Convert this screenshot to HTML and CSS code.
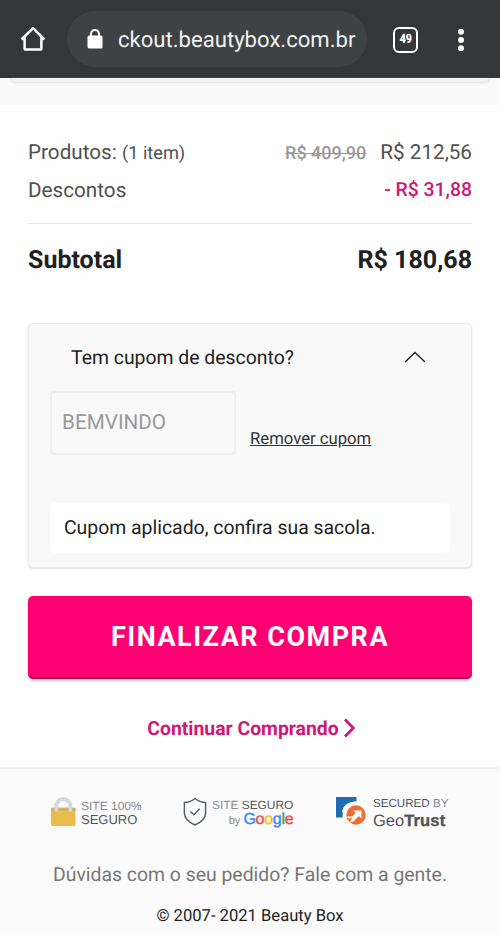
FILE: index.html
```html
<!DOCTYPE html>
<html lang="pt-BR">
<head>
<meta charset="utf-8">
<title>Beauty Box - Sacola</title>
<link rel="stylesheet" href="styles.css">
</head>
<body>
<header class="browser">
  <svg class="home" width="28" height="28" viewBox="0 0 28 28"><path d="M2.500 14.500 14 3.200 25.500 14.500M5.600 12v11.200q0 1.400 1.400 1.400h14q1.400 0 1.400-1.400V12" fill="none" stroke="#fff" stroke-width="2.500" stroke-linejoin="round"/></svg>
  <div class="address">
    <svg width="16" height="20" viewBox="0 0 16 20"><path d="M4 7V5a4 4 0 0 1 8 0v2" fill="none" stroke="#fff" stroke-width="2"/><rect x=".5" y="6.600" width="15" height="13" rx="1.500" fill="#fff"/></svg>
    <span class="url">ckout.beautybox.com.br</span>
  </div>
  <span class="tabs">49</span>
  <svg class="dots" width="8" height="24" viewBox="0 0 8 24" fill="#fff"><circle cx="4" cy="3.700" r="3"/><circle cx="4" cy="12" r="3"/><circle cx="4" cy="20.300" r="3"/></svg>
</header>
<div class="previous"><div class="previous-card"></div></div>
<main>
  <section class="summary">
    <div class="row products"><span>Produtos: <small>(1 item)</small></span><span><s>R$ 409,90</s><span class="price">R$ 212,56</span></span></div>
    <div class="row discounts"><span class="label">Descontos</span><span class="discount">- R$ 31,88</span></div>
    <div class="row subtotal"><span class="label">Subtotal</span><span>R$ 180,68</span></div>
  </section>
  <section class="coupon">
    <div class="coupon-title"><span>Tem cupom de desconto?</span><svg width="22" height="12" viewBox="0 0 22 12"><path d="m1 11 10-9.500L21 11" fill="none" stroke="#222" stroke-width="1.400"/></svg></div>
    <div class="coupon-form"><div class="field">BEMVINDO</div><a class="remove">Remover cupom</a></div>
    <div class="message">Cupom aplicado, confira sua sacola.</div>
  </section>
  <button class="checkout">FINALIZAR COMPRA</button>
  <a class="continue"><span>Continuar Comprando</span><svg width="13" height="20" viewBox="0 0 13 20"><path d="m2 1.500 8.300 8.500L2 18.500" fill="none" stroke="#cf1775" stroke-width="2.800"/></svg></a>
</main>
<footer>
  <div class="seals">
    <div class="seal safe">
      <svg width="26" height="30" viewBox="0 0 26 30"><rect x="1" y="10.500" width="24.500" height="18.500" rx="1.500" fill="#e8bd4d"/><path d="M1 11h24.500v3H1z" fill="#d9b052"/><path d="M6.300 13V9a7 7 0 0 1 14 0v4" fill="none" stroke="#d3d7df" stroke-width="4" stroke-linecap="round"/></svg>
      <div class="seal-text"><span class="light">SITE 100%</span><span class="secure">SEGURO</span></div>
    </div>
    <div class="seal google">
      <svg width="24" height="30" viewBox="0 0 24 30"><path d="M12 1.500Q16.500 5.400 22.600 5.500V16c0 6-5 9.500-10.600 12C6.400 25.500 1.400 22 1.400 16V5.500Q7.500 5.400 12 1.500Z" fill="none" stroke="#596066" stroke-width="1.500"/><path d="m7.500 14.500 3.500 3.200 5.700-6" fill="none" stroke="#596066" stroke-width="1.500"/></svg>
      <div class="seal-text"><span><span class="light">SITE</span> SEGURO</span><span class="by">by <b><i class="blue">G</i><i class="red">o</i><i class="yellow">o</i><i class="blue">g</i><i class="green">l</i><i class="red">e</i></b></span></div>
    </div>
    <div class="seal geo">
      <svg width="31" height="30" viewBox="0 0 31 30"><path d="M0 0h20.500v4.500C12 4.500 6.500 10 6.500 20.500H0Z" fill="#1e6cb3"/><circle cx="20" cy="18" r="11" fill="#fbfbfb"/><path d="M7 15.500C8 8.500 13 5.500 20.500 5.500" fill="none" stroke="#fbfbfb" stroke-width="2"/><circle cx="20" cy="18" r="9.700" fill="#eb6f36"/><path d="M11 19.500h5l3.800-3.600-2.500-2.400h8.200v8l-2.600-2.500-5.900 5.800h-3.500l3-3.500h-4.500Z" fill="#fff"/></svg>
      <div class="seal-text"><span>SECURED <span class="light">BY</span></span><span class="trust">Geo<b>Trust</b></span></div>
    </div>
  </div>
  <p class="help">Dúvidas com o seu pedido? Fale com a gente.</p>
  <p class="copyright">© 2007- 2021 Beauty Box</p>
</footer>
</body>
</html>
```
FILE: styles.css
```css
* { box-sizing: border-box; }
body { margin: 0; width: 500px; height: 934px; overflow: hidden; background: #fff; font-family: Roboto, sans-serif; color: #222; white-space: nowrap; text-rendering: geometricPrecision; }
.browser { height: 78px; background: #35363a; display: flex; align-items: center; padding-left: 19px; }
.home { margin-right: 20px; }
.address { width: 300px; height: 56px; border-radius: 28px; background: #3e4245; display: flex; align-items: center; padding-left: 20px; color: #f1f1f1; }
.url { margin: 2px 0 0 15px; font-size: 22.1px; line-height: 28px; }
.tabs { width: 25px; height: 26px; margin: 1px 0 0 26px; border: 2.5px solid #fff; border-radius: 6px; color: #fff; font: 700 13px/22px "Roboto Condensed", Roboto, sans-serif; text-align: center; letter-spacing: -.6px; }
.dots { margin: 1px 0 0 39px; }
.previous { height: 27px; background: #fafafa; padding: 0 10px; }
.previous-card { height: 5px; background: #f1f2f2; border: 1px solid #e5e6e6; border-top: 0; border-radius: 0 0 5px 5px; box-shadow: 0 1px 2px #eee; }
main { height: 664px; padding: 36px 28px 0; border-bottom: 2px solid #f1f1f1; }
.row { display: flex; justify-content: space-between; align-items: baseline; }
.summary { height: 182px; }
.products, .discounts { font-size: 20.7px; line-height: 25px; color: #505050; }
.products { height: 38px; }
small { font-size: 18.2px; }
s { font-size: 18px; font-weight: 500; color: #999; margin-right: 14px; }
.discounts { height: 45px; border-bottom: 1px solid #e6e6e6; align-items: flex-start; }
.discount { color: #cf1775; margin-top: -2px; font-size: 19.4px; font-weight: 500; }
.subtotal { padding-top: 22px; font-size: 25px; line-height: 30px; font-weight: 700; color: #202020; }
.coupon { height: 245px; border: 1px solid #ececec; border-radius: 5px; background: #f9f9f9; box-shadow: 0 1px 2px #ddd; padding: 20px 21px 0; }
.coupon-title { display: flex; justify-content: space-between; align-items: center; padding: 0 24px 0 21px; height: 26px; font-size: 19.4px; }
.coupon-form { display: flex; margin-top: 21px; height: 64px; }
.field { width: 186px; border: 2px solid #eee; border-radius: 4px; padding-left: 10px; font-size: 20.7px; line-height: 61px; color: #999; }
.remove { margin: 39px 0 0 14px; font-size: 16.7px; line-height: 20px; color: #333; text-decoration: underline; }
.message { margin-top: 48px; width: 400px; height: 50px; border-radius: 5px; background: #fff; padding-left: 14px; font-size: 19.4px; line-height: 50px; }
.checkout { display: block; width: 444px; height: 83px; margin-top: 28px; padding: 1px 0 0; border: 0; border-bottom: 2px solid #b80458; border-radius: 5px; background: #ff0072; box-shadow: 0 2px 3px #ccc; color: #fff; font: 700 27px Roboto, sans-serif; letter-spacing: 1.5px; }
.continue { display: flex; justify-content: center; align-items: center; gap: 4px; margin: 36px 0 0 3px; height: 26px; color: #cf1775; font-size: 19.4px; font-weight: 700; }
footer { height: 165px; background: #fbfbfb; }
.seals { display: flex; height: 75px; padding: 28px 0 0 50px; font-family: "Liberation Sans", sans-serif; color: #50565b; }
.seal { display: flex; height: 32px; }
.safe { width: 133px; }
.google { width: 153px; }
.seal-text { display: flex; flex-direction: column; font-size: 12px; line-height: 13px; }
.light { color: #858a8e; }
.safe .seal-text { margin: 3px 0 0 5px; }
.secure { font-size: 13px; }
.google .seal-text { margin: 2px 0 0 5px; font-size: 11.9px; }
.by { align-self: flex-end; font-size: 11px; line-height: 16px; color: #858a8e; }
.by b { font-size: 16px; font-weight: 400; letter-spacing: -.3px; -webkit-text-stroke: .4px; }
i { font-style: normal; }
.blue { color: #4285f4; } .red { color: #e94d43; } .yellow { color: #f5bd19; } .green { color: #34a853; }
.geo .seal-text { margin: 0 0 0 6px; font-size: 11.6px; }
.geo .trust { font-size: 16.5px; line-height: 22px; }
.trust b { -webkit-text-stroke: .4px; letter-spacing: .15px; }
p { margin: 0; text-align: center; }
.help { padding-top: 18px; height: 53px; font-size: 19.4px; line-height: 26px; color: #777; }
.copyright { padding-top: 10px; font-size: 16.6px; line-height: 20px; }
```
